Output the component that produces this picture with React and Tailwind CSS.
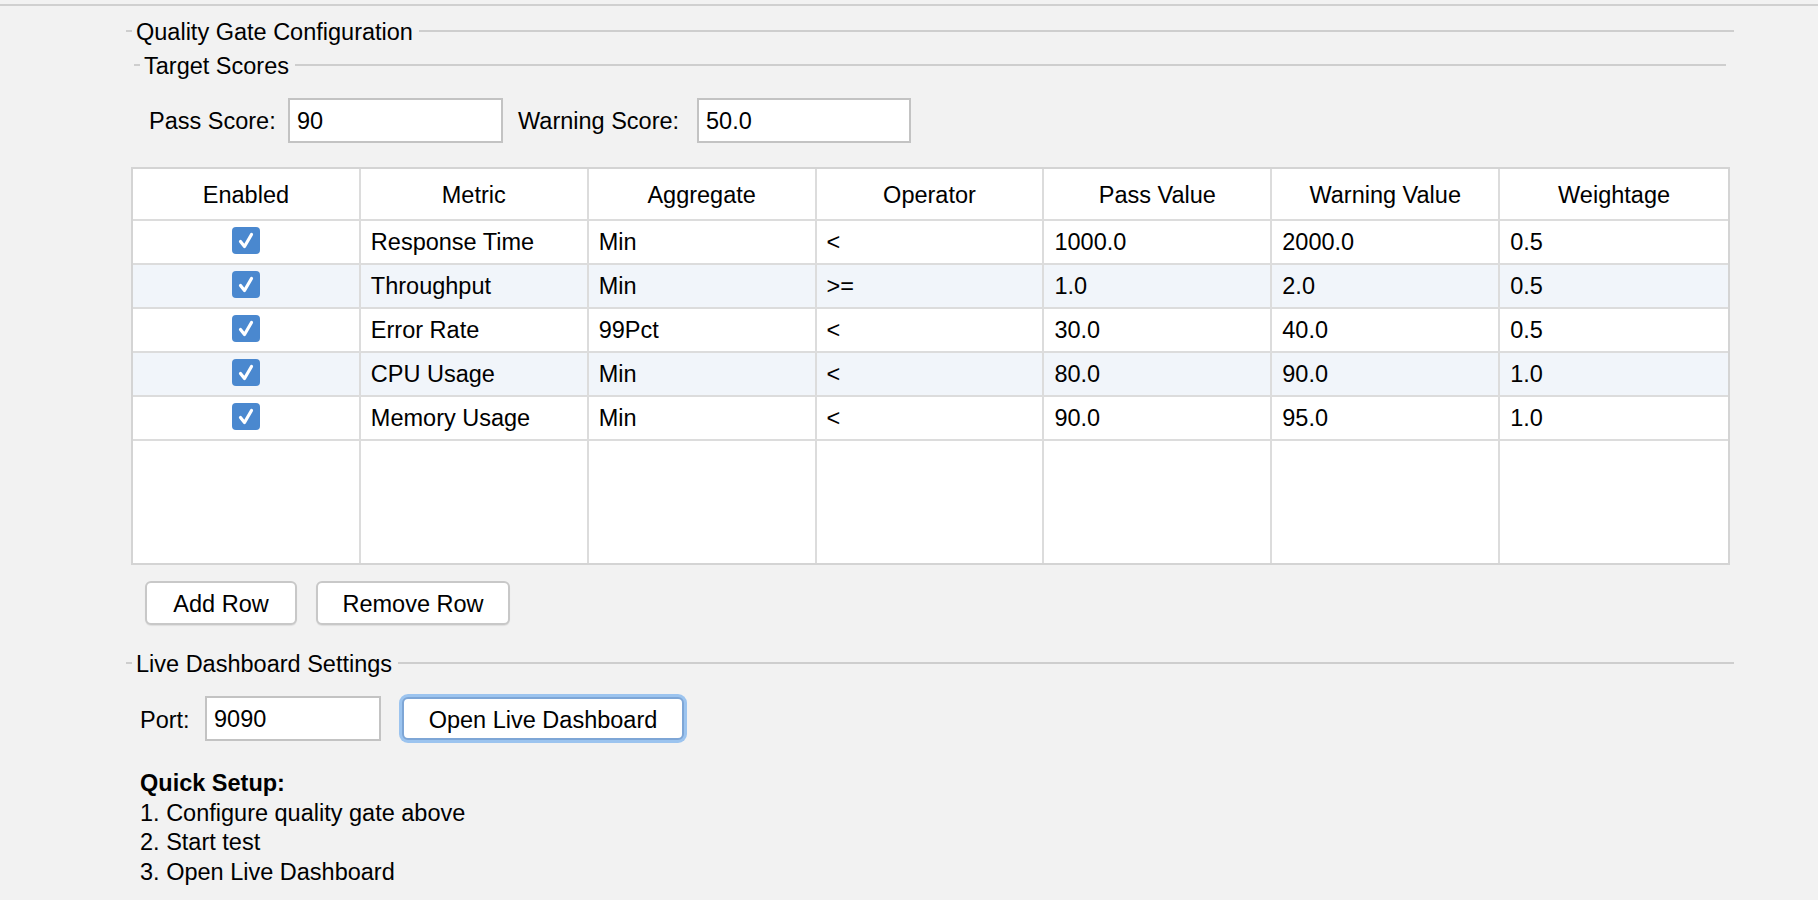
const rows = [
  ['Response Time', 'Min', '<', '1000.0', '2000.0', '0.5'],
  ['Throughput', 'Min', '>=', '1.0', '2.0', '0.5'],
  ['Error Rate', '99Pct', '<', '30.0', '40.0', '0.5'],
  ['CPU Usage', 'Min', '<', '80.0', '90.0', '1.0'],
  ['Memory Usage', 'Min', '<', '90.0', '95.0', '1.0'],
];

const headers = ['Enabled', 'Metric', 'Aggregate', 'Operator', 'Pass Value', 'Warning Value', 'Weightage'];

function TitledRow({ title, className = '' }) {
  return (
    <div className={'flex items-center h-[30px] ' + className}>
      <div className="w-[6px] h-[2px] bg-[#cecece]" />
      <span className="ml-[4px] mr-[6px] pt-[4px] whitespace-nowrap leading-none">{title}</span>
      <div className="flex-1 h-[2px] bg-[#cecece]" />
    </div>
  );
}

function Check() {
  return (
    <svg width="28" height="27" viewBox="0 0 28 27" className="block">
      <rect x="0" y="0" width="28" height="27" rx="4" fill="#4a88cf" />
      <path d="M8.5 14.5 L12.5 19.5 L19.5 7.5" fill="none" stroke="#ffffff" strokeWidth="3.2" strokeLinecap="round" strokeLinejoin="round" />
    </svg>
  );
}

function TextBox({ value, className = '' }) {
  return (
    <div className={'h-[45px] bg-white border-2 border-[#c3c3c3] flex items-center pl-[7px] pt-[3px] ' + className}>
      <span className="leading-none">{value}</span>
    </div>
  );
}

export default function App() {
  return (
    <div
      className="w-full h-[900px] overflow-hidden bg-[#f2f2f2] text-black text-[23.5px]"
      style={{ fontFamily: '"Liberation Sans", Arial, sans-serif' }}
    >
      {/* top separator */}
      <div className="mt-[4px] h-[2px] bg-[#d0d0d0]" />

      <div className="pl-[126px] pr-[84px]">
        {/* Quality gate */}
        <TitledRow title="Quality Gate Configuration" className="mt-[10px]" />

        <div className="px-[8px]">
          <TitledRow title="Target Scores" className="mt-[4px]" />
          <div className="flex items-center mt-[18px] pl-[15px]">
            <span className="w-[139px] pt-[3px] whitespace-nowrap">Pass Score:</span>
            <TextBox value="90" className="w-[215px]" />
            <span className="ml-[15px] w-[179px] pt-[3px] whitespace-nowrap">Warning Score:</span>
            <TextBox value="50.0" className="w-[214px]" />
          </div>
        </div>

        {/* table */}
        <div className="ml-[5px] mr-[4px] mt-[24px] h-[398px] bg-white border-2 border-[#d4d4d4] flex flex-col">
          <div className="grid grid-cols-7 h-[52px] border-b-2 border-[#dcdcdc] shrink-0">
            {headers.map((h, i) => (
              <div
                key={h}
                className={'flex items-center justify-center pt-[4px] ' + (i < 6 ? 'border-r-2 border-[#dcdcdc]' : '')}
              >
                {h}
              </div>
            ))}
          </div>
          {rows.map((r, ri) => (
            <div
              key={r[0]}
              className={
                'grid grid-cols-7 h-[44px] border-b-2 border-[#dcdcdc] shrink-0 ' +
                (ri % 2 === 1 ? 'bg-[#f1f5fa]' : 'bg-white')
              }
            >
              <div className="flex items-center justify-center border-r-2 border-[#dcdcdc] pb-[4px]">
                <Check />
              </div>
              {r.map((c, ci) => (
                <div
                  key={ci}
                  className={'flex items-center pl-[10px] pt-[2px] ' + (ci < 5 ? 'border-r-2 border-[#dcdcdc]' : '')}
                >
                  {c}
                </div>
              ))}
            </div>
          ))}
          <div className="grid grid-cols-7 flex-1">
            {headers.map((h, i) => (
              <div key={h} className={i < 6 ? 'border-r-2 border-[#dcdcdc]' : ''} />
            ))}
          </div>
        </div>

        {/* table buttons */}
        <div className="flex items-center gap-[19px] mt-[16px] pl-[19px]">
          <button className="w-[152px] h-[44px] pt-[4px] bg-white border-2 border-[#c8c8c8] rounded-[6px] shadow-[0_1px_1px_rgba(0,0,0,0.08)]">
            Add Row
          </button>
          <button className="w-[194px] h-[44px] pt-[4px] bg-white border-2 border-[#c8c8c8] rounded-[6px] shadow-[0_1px_1px_rgba(0,0,0,0.08)]">
            Remove Row
          </button>
        </div>

        {/* live dashboard */}
        <TitledRow title="Live Dashboard Settings" className="mt-[23px]" />
        <div className="flex items-center mt-[18px] pl-[14px]">
          <span className="w-[65px] pt-[4px] whitespace-nowrap">Port:</span>
          <TextBox value="9090" className="w-[176px] h-[44px]" />
          <button className="ml-[21px] w-[282px] h-[43px] pt-[4px] bg-white border-2 border-[#7ea6d6] rounded-[6px] shadow-[0_0_0_3px_#9cc4ef]">
            Open Live Dashboard
          </button>
        </div>

        {/* quick setup */}
        <div className="mt-[28px] pl-[14px] leading-[29.5px]">
          <div className="font-bold">Quick Setup:</div>
          <div>1. Configure quality gate above</div>
          <div>2. Start test</div>
          <div>3. Open Live Dashboard</div>
        </div>
      </div>
    </div>
  );
}
